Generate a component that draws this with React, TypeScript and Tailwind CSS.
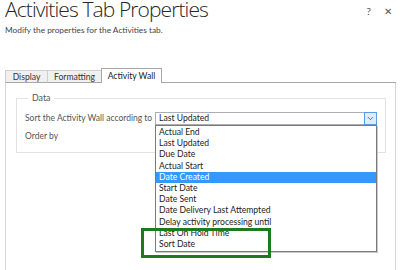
import { ChevronDown } from "lucide-react";

const options = [
  "Actual End",
  "Last Updated",
  "Due Date",
  "Actual Start",
  "Date Created",
  "Start Date",
  "Date Sent",
  "Date Delivery Last Attempted",
  "Delay activity processing until",
  "Last On Hold Time",
  "Sort Date",
];

const Tab = ({ label, width, active }: { label: string; width: string; active?: boolean }) =>
  active ? (
    <div className={`${width} h-[15px] border border-b-0 border-[#a8a8a8] bg-white text-center text-[8.6px] leading-[14px] text-[#222]`}>
      {label}
    </div>
  ) : (
    <div className={`${width} h-[13px] border border-[#cfcfcf] border-b-[#a8a8a8] bg-[#f0f0f0] text-center text-[8.6px] leading-[12px] text-[#333] -mr-px`}>
      {label}
    </div>
  );

export default function App() {
  return (
    <div
      className="relative w-[400px] h-[270px] overflow-hidden bg-white text-[#333]"
      style={{ fontFamily: 'Lato, "Open Sans", sans-serif' }}
    >
      <header className="flex items-start justify-between pl-[5px] pr-[8px]">
        <div>
          <h1
            className="-mt-[3px] text-[21px] font-light leading-[24px] tracking-[-0.9px] text-[#262626]"
            style={{ fontFamily: '"Open Sans", sans-serif' }}
          >
            Activities Tab Properties
          </h1>
          <p className="mt-[3px] text-[8.3px] leading-[12px] text-[#444]">
            Modify the properties for the Activities tab.
          </p>
        </div>
        <div className="flex gap-[13px] pt-[4px] text-[10px] text-[#555]">
          <span>?</span>
          <span>✕</span>
        </div>
      </header>

      <section className="mt-[32px] ml-[5px] w-[391px]">
        <div className="flex items-end">
          <Tab label="Display" width="w-[43px]" />
          <Tab label="Formatting" width="w-[55px]" />
          <Tab label="Activity Wall" width="w-[61px]" active />
          <div className="flex-1 border-b border-[#a8a8a8]" />
        </div>

        <div className="h-[190px] border-l border-r border-[#d6d6d6] px-[10px] pt-[9px]">
          <fieldset className="relative h-[61px] border border-[#e2e2e2] px-[8px]">
            <legend className="ml-[3px] px-[4px] text-[8.8px] leading-[12px] text-[#555]">
              Data
            </legend>
            <div className="mt-[8px] flex h-[13px] items-center">
              <span className="w-[130px] whitespace-nowrap text-[8.5px] text-[#555]">
                Sort the Activity Wall according to
              </span>
              <div className="relative">
                <div className="flex h-[13px] w-[222px] items-center border border-[#abadb3] bg-white">
                  <span className="flex-1 pl-[3px] text-[8.6px] leading-[11px] text-[#222]">
                    Last Updated
                  </span>
                  <span className="-mr-px flex h-[13px] w-[13px] items-center justify-center border border-[#569de5] bg-[#dcecfc]">
                    <ChevronDown size={9} strokeWidth={2} color="#444" />
                  </span>
                </div>
                <ul className="absolute left-0 top-[13px] z-10 w-[222px] border border-[#7a7a7a] bg-white py-[1px] shadow-[1px_1px_0_#c8c8c8]">
                  {options.map((o) => (
                    <li
                      key={o}
                      className={
                        o === "Date Created"
                          ? "h-[11.2px] pl-[3px] text-[8.6px] leading-[11.2px] bg-[#3399ff] text-white"
                          : "h-[11.2px] pl-[3px] text-[8.6px] leading-[11.2px] text-[#222]"
                      }
                    >
                      {o}
                    </li>
                  ))}
                </ul>
              </div>
            </div>
            <div className="mt-[5px] text-[8.5px] text-[#555]">Order by</div>
          </fieldset>
        </div>
      </section>

      <div className="absolute left-[141px] top-[228px] z-20 h-[30px] w-[130px] border-[3px] border-[#1e7a1e]" />
    </div>
  );
}
